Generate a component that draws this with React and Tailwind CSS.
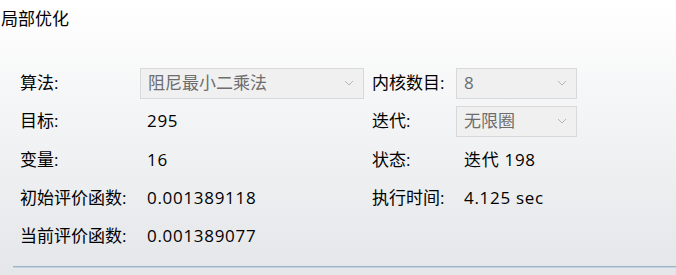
const font = { fontFamily: '"Open Sans", "Noto Sans CJK SC", sans-serif' };

const Chevron = () => (
  <svg width="10" height="6" viewBox="0 0 10 6" className="shrink-0">
    <path d="M1 1 L5 5 L9 1" fill="none" stroke="#b5b5b5" strokeWidth="1" />
  </svg>
);

const Combo = ({ value, className }) => (
  <div
    className={`flex h-[31px] items-center justify-between border border-[#d9d9d9] bg-[#f0f0f0] pl-[7px] pr-[9px] text-[#6d6d6d] ${className}`}
  >
    <span>{value}</span>
    <Chevron />
  </div>
);

const Row = ({ children, h = "h-[38px]" }) => <div className={`flex items-center ${h}`}>{children}</div>;

const Val = ({ children }) => <span className="tracking-[0.7px]">{children}</span>;

export default function App() {
  return (
    <div
      className="relative h-[275px] w-[676px] overflow-hidden bg-gradient-to-b from-white to-[#e4e6e9] text-[17px] leading-[24px] text-black"
      style={font}
    >
      <div className="pt-[7px] pl-[1px]">局部优化</div>

      <div className="mt-[34px] flex pl-[20px]">
        {/* left column */}
        <div className="flex flex-col">
          <Row h="h-[36px]">
            <span className="w-[120px]">算法:</span>
            <Combo value="阻尼最小二乘法" className="w-[224px]" />
          </Row>
          <Row h="h-[40px]">
            <span className="w-[127px]">目标:</span>
            <Val>295</Val>
          </Row>
          <Row>
            <span className="w-[127px]">变量:</span>
            <Val>16</Val>
          </Row>
          <Row>
            <span className="w-[127px]">初始评价函数:</span>
            <Val>0.001389118</Val>
          </Row>
          <Row>
            <span className="w-[127px]">当前评价函数:</span>
            <Val>0.001389077</Val>
          </Row>
        </div>

        {/* right column */}
        <div className="ml-[8px] flex flex-col">
          <Row h="h-[36px]">
            <span className="w-[84px]">内核数目:</span>
            <Combo value="8" className="w-[121px]" />
          </Row>
          <Row h="h-[40px]">
            <span className="w-[84px]">迭代:</span>
            <Combo value="无限圈" className="w-[121px]" />
          </Row>
          <Row>
            <span className="w-[92px]">状态:</span>
            <Val>迭代 198</Val>
          </Row>
          <Row>
            <span className="w-[92px]">执行时间:</span>
            <Val>4.125 sec</Val>
          </Row>
        </div>
      </div>

      <div className="absolute bottom-[7px] left-[13px] right-0 h-[2px] border-t border-[#9cb4ca] bg-[#c3d3e0]" />
    </div>
  );
}
